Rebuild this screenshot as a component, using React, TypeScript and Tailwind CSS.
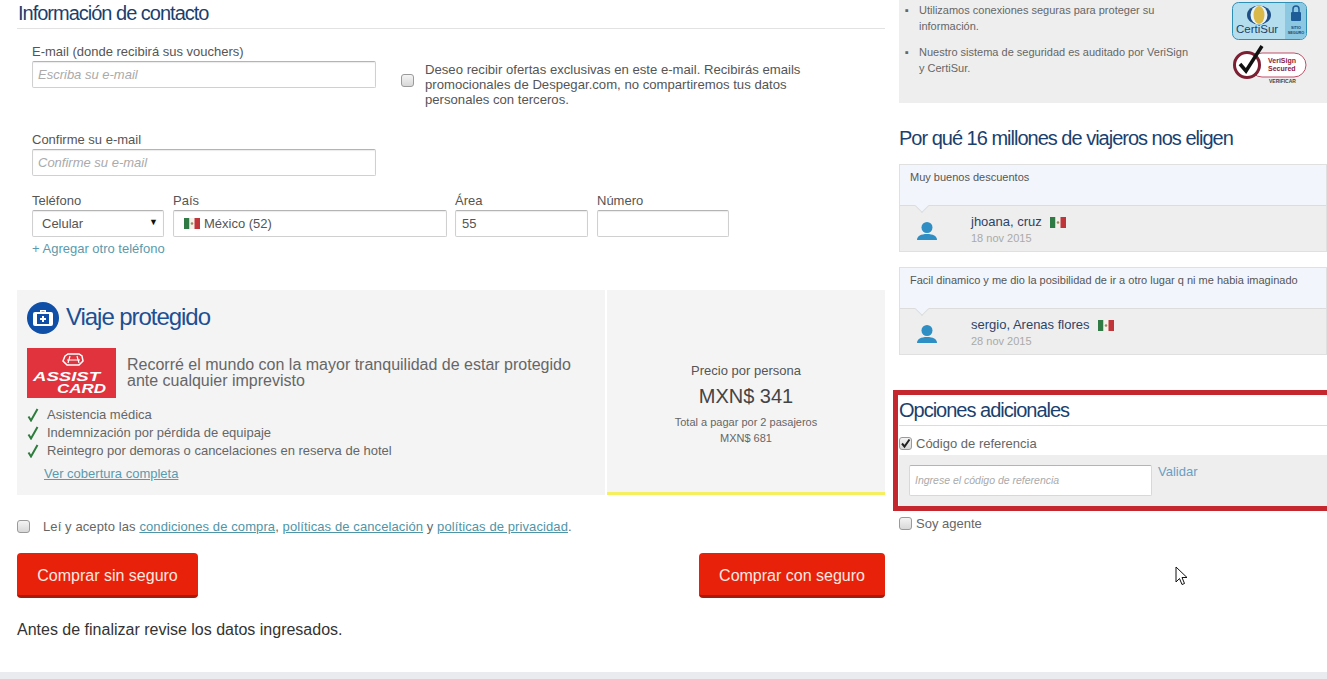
const field = 'h-[27px] border border-[#d0d0d0] border-t-[#b4b4b4] rounded-[2px] bg-white shadow-[inset_0_1px_1px_rgba(0,0,0,0.08)] text-[13px] text-[#555] flex items-center'

function Flag({ className = '' }: { className?: string }) {
  return (
    <svg width="16" height="11" viewBox="0 0 16 11" className={className}>
      <rect width="5.5" height="11" fill="#2f7a45" />
      <rect x="5.5" width="5" height="11" fill="#f4f1ec" />
      <rect x="10.5" width="5.5" height="11" fill="#c0353a" />
      <circle cx="8" cy="5.5" r="1.3" fill="#9a8a5a" />
    </svg>
  )
}

function Box({ checked = false, className = '' }: { checked?: boolean; className?: string }) {
  return (
    <span className={`flex h-[13px] w-[13px] shrink-0 items-center justify-center rounded-[3px] border border-[#9a9a9a] bg-gradient-to-b from-[#f4f4f4] to-[#d8d8d8] ${className}`}>
      {checked && (
        <svg width="11" height="11" viewBox="0 0 11 11" fill="none" stroke="#222" strokeWidth="2">
          <path d="M2 5.5l2.5 3L9.5 1.5" />
        </svg>
      )}
    </span>
  )
}

function Heading({ children }: { children: React.ReactNode }) {
  return <h2 className="text-[20px] leading-[24px] tracking-[-1px] text-[#1b3f6e]">{children}</h2>
}

function Check({ children }: { children: React.ReactNode }) {
  return (
    <li className="flex h-[18px] items-center text-[13px] text-[#666]">
      <svg width="12" height="14" viewBox="0 0 12 14" fill="none" stroke="#2e7d3e" strokeWidth="2" className="mr-[8px] shrink-0">
        <path d="M1.5 8.5l2.5 4L10.5 1" />
      </svg>
      {children}
    </li>
  )
}

function Review({ text, name, date }: { text: string; name: string; date: string }) {
  return (
    <div className="border border-[#e0e0e0] text-[11px]">
      <div className="h-[40px] bg-[#f2f6fc] px-[10px] pt-[5px] leading-[14px] text-[#555]">{text}</div>
      <div className="relative flex h-[46px] border-t border-[#dcdcdc] bg-[#eeeeee]">
        <span className="absolute -top-px left-[17px] h-[10px] w-[10px] -translate-y-[4px] rotate-45 border-b border-r border-[#dcdcdc] bg-[#f2f6fc]" />
        <svg width="20" height="20" viewBox="0 0 20 20" fill="#2f8fc4" className="ml-[17px] mt-[15px]">
          <circle cx="10" cy="6.5" r="5.5" />
          <path d="M0 19c0-4 4-6 10-6s10 2 10 6z" />
        </svg>
        <div className="ml-[34px] pt-[8px]">
          <div className="flex items-center text-[13px] leading-[16px] text-[#2b4468]">
            {name}
            <Flag className="ml-[8px]" />
          </div>
          <div className="mt-[1px] text-[11px] leading-[14px] text-[#aaa]">{date}</div>
        </div>
      </div>
    </div>
  )
}

function AssistCard() {
  return (
    <svg width="89" height="50" viewBox="0 0 89 50" className="shrink-0">
      <rect width="89" height="50" fill="#e1333d" />
      <path d="M38 8l3-2h11l3 2 1 5-4 4H40l-4-4z" fill="none" stroke="#fff" strokeWidth="1.5" />
      <path d="M40 12h13M43 8l-2 7M50 8l2 7" fill="none" stroke="#fff" strokeWidth="1.2" />
      <text x="6" y="33" fontSize="13" fontWeight="700" fontStyle="italic" fill="#fff" textLength="67" lengthAdjust="spacingAndGlyphs" fontFamily="Liberation Sans, sans-serif">ASSIST</text>
      <text x="30" y="44.500" fontSize="13" fontWeight="700" fontStyle="italic" fill="#fff" textLength="49" lengthAdjust="spacingAndGlyphs" fontFamily="Liberation Sans, sans-serif">CARD</text>
    </svg>
  )
}

function CertiSur() {
  return (
    <svg width="75" height="38" viewBox="0 0 75 38">
      <rect x="0.5" y="0.5" width="74" height="37" rx="6" fill="#b4deee" stroke="#2e8fb6" />
      <path d="M53 1h16a5 5 0 0 1 5 5v26a5 5 0 0 1-5 5H53z" fill="#8cc8e2" />
      <ellipse cx="27" cy="13" rx="12" ry="9.500" fill="#1d4e86" />
      <ellipse cx="27" cy="13" rx="8.500" ry="9.500" fill="#e9f4f8" />
      <ellipse cx="27" cy="13" rx="5.500" ry="9" fill="#d9b94a" />
      <rect x="59" y="10" width="10" height="9" rx="1" fill="#1d5c96" />
      <path d="M61 10V7a3 3 0 0 1 6 0v3" fill="none" stroke="#1d5c96" strokeWidth="1.5" />
      <text x="4" y="31" fontSize="11.500" fill="#1d3f66" fontFamily="Liberation Sans, sans-serif">CertiSur</text>
      <text x="64" y="27" fontSize="3.800" fontWeight="700" textAnchor="middle" fill="#1d3f66" fontFamily="Liberation Sans, sans-serif">SITIO</text>
      <text x="64" y="32" fontSize="3.800" fontWeight="700" textAnchor="middle" fill="#1d3f66" fontFamily="Liberation Sans, sans-serif">SEGURO</text>
    </svg>
  )
}

function VeriSign() {
  return (
    <svg width="75" height="40" viewBox="0 0 75 40">
      <rect x="18" y="8" width="56" height="24" rx="12" fill="#fff" stroke="#c05068" />
      <circle cx="15" cy="20" r="12.500" fill="#fff" stroke="#7c1f33" strokeWidth="3" />
      <path d="M8 19l6 7L30 1" fill="none" stroke="#111" strokeWidth="3.500" />
      <text x="36" y="18" fontSize="7" fontWeight="700" fill="#8c2138" fontFamily="Liberation Sans, sans-serif">VeriSign</text>
      <text x="36" y="26" fontSize="7" fontWeight="700" fill="#8c2138" fontFamily="Liberation Sans, sans-serif">Secured</text>
      <text x="37" y="38" fontSize="5" fontWeight="700" fill="#444" fontFamily="Liberation Sans, sans-serif">VERIFICAR</text>
    </svg>
  )
}

export default function App() {
  return (
    <div className="relative h-[679px] w-[1327px] overflow-hidden bg-white font-['Liberation_Sans',Arial,sans-serif]">
      <div className="flex h-[672px] pl-[17px]">
        {/* Left column */}
        <main className="w-[868px]">
          <div className="h-[29px] border-b border-[#e2e2e2] pl-px pt-px">
            <Heading>Información de contacto</Heading>
          </div>

          <div className="pl-[15px]">
            <div className="mt-[15px] flex">
              <div className="w-[344px]">
                <label className="block text-[13px] leading-[15px] text-[#555]">E-mail (donde recibirá sus vouchers)</label>
                <div className={`${field} mt-[2px] pl-[5px] italic text-[#aaa]`}>Escriba su e-mail</div>
              </div>
              <div className="ml-[25px] mt-[30px]">
                <Box />
              </div>
              <p className="ml-[11px] mt-[18px] w-[385px] text-[13.15px] leading-[15px] text-[#555]">
                Deseo recibir ofertas exclusivas en este e-mail. Recibirás emails promocionales de Despegar.com, no compartiremos tus datos personales con terceros.
              </p>
            </div>

            <div className="mt-[25px] w-[344px]">
              <label className="block text-[13px] leading-[15px] text-[#555]">Confirme su e-mail</label>
              <div className={`${field} mt-[2px] pl-[5px] italic text-[#aaa]`}>Confirme su e-mail</div>
            </div>

            <div className="mt-[17px] flex">
              <div className="mr-[9px] w-[132px]">
                <label className="block text-[13px] leading-[15px] text-[#555]">Teléfono</label>
                <div className={`${field} mt-[2px] justify-between pl-[9px] pr-[5px]`}>
                  Celular
                  <span className="mb-[2px] text-[9px] text-[#111]">▼</span>
                </div>
              </div>
              <div className="mr-[8px] w-[274px]">
                <label className="block text-[13px] leading-[15px] text-[#555]">País</label>
                <div className={`${field} mt-[2px] pl-[10px]`}>
                  <Flag className="mr-[4px]" />
                  México (52)
                </div>
              </div>
              <div className="mr-[9px] w-[133px]">
                <label className="block text-[13px] leading-[15px] text-[#555]">Área</label>
                <div className={`${field} mt-[2px] pl-[6px]`}>55</div>
              </div>
              <div className="w-[132px]">
                <label className="block text-[13px] leading-[15px] text-[#555]">Número</label>
                <div className={`${field} mt-[2px]`} />
              </div>
            </div>

            <div className="mt-[4px] text-[13px] leading-[15px] text-[#5b9aad]">+ Agregar otro teléfono</div>
          </div>

          {/* Viaje protegido */}
          <div className="mt-[34px] flex h-[205px]">
            <div className="w-[588px] bg-[#f4f4f5] pl-[10px] pt-[12px]">
              <div className="flex items-center">
                <span className="flex h-[32px] w-[32px] items-center justify-center rounded-full bg-[#0f4fa8]">
                  <svg width="20" height="18" viewBox="0 0 20 18" fill="#fff">
                    <path d="M7 3V1h6v2h5a2 2 0 0 1 2 2v10a2 2 0 0 1-2 2H2a2 2 0 0 1-2-2V5a2 2 0 0 1 2-2zM8.500 3h3V2.500h-3zM4 5v10h12V5zM9 7h2v2h2v2h-2v2H9v-2H7V9h2z" fillRule="evenodd" />
                  </svg>
                </span>
                <span className="-mt-[2px] ml-[7px] text-[24px] leading-[28px] tracking-[-1.05px] text-[#1d4f94]">Viaje protegido</span>
              </div>
              <div className="mt-[14px] flex">
                <AssistCard />
                <p className="ml-[11px] mt-[9px] w-[450px] text-[16px] leading-[16px] text-[#666]">
                  Recorré el mundo con la mayor tranquilidad de estar protegido ante cualquier imprevisto
                </p>
              </div>
              <ul className="mt-[8px]">
                <Check>Asistencia médica</Check>
                <Check>Indemnización por pérdida de equipaje</Check>
                <Check>Reintegro por demoras o cancelaciones en reserva de hotel</Check>
              </ul>
              <a className="ml-[17px] mt-[6px] block text-[13px] leading-[15px] text-[#5b9aad] underline">Ver cobertura completa</a>
            </div>
            <div className="ml-[2px] w-[278px] border-b-[3px] border-[#f6f060] bg-[#f4f4f5] pt-[73px] text-center">
              <div className="text-[13px] leading-[15px] text-[#555]">Precio por persona</div>
              <div className="mt-[5px] text-[20px] leading-[26px] text-[#444]">MXN$ 341</div>
              <div className="mt-[5px] text-[11px] leading-[16px] text-[#666]">
                Total a pagar por 2 pasajeros
                <br />
                MXN$ 681
              </div>
            </div>
          </div>

          <div className="mt-[24px] flex h-[15px] items-center text-[13px] tracking-[0.1px] text-[#666]">
            <Box className="mr-[13px]" />
            <span>
              Leí y acepto las <a className="text-[#4f95a8] underline">condiciones de compra</a>,{' '}
              <a className="text-[#4f95a8] underline">políticas de cancelación</a> y{' '}
              <a className="text-[#4f95a8] underline">políticas de privacidad</a>.
            </span>
          </div>

          <div className="mt-[19px] flex justify-between">
            <button className="h-[45px] w-[181px] rounded-[4px] border-b-[3px] border-[#a61c0c] bg-[#e8210a] pt-[3px] text-[16px] text-[#ffe9e0]">Comprar sin seguro</button>
            <button className="h-[45px] w-[186px] rounded-[4px] border-b-[3px] border-[#a61c0c] bg-[#e8210a] pt-[3px] text-[16px] text-[#ffe9e0]">Comprar con seguro</button>
          </div>

          <p className="mt-[23px] text-[16px] leading-[18px] text-[#333]">Antes de finalizar revise los datos ingresados.</p>
        </main>

        {/* Right column */}
        <aside className="ml-[14px] w-[428px] shrink-0">
          <div className="flex h-[103px] justify-between bg-[#eeeeee] pl-[20px] pr-[20px] pt-[2px]">
            <ul className="w-[275px] text-[11px] leading-[16px] text-[#666]">
              <li className="relative">
                <span className="absolute -left-[14px]">▪</span>
                Utilizamos conexiones seguras para proteger su
                <br />
                información.
              </li>
              <li className="relative mt-[10px]">
                <span className="absolute -left-[14px]">▪</span>
                Nuestro sistema de seguridad es auditado por VeriSign
                <br />y CertiSur.
              </li>
            </ul>
            <div className="flex flex-col gap-[5px]">
              <CertiSur />
              <VeriSign />
            </div>
          </div>

          <div className="mt-[23px]">
            <Heading>Por qué 16 millones de viajeros nos eligen</Heading>
          </div>
          <div className="mt-[14px] flex flex-col gap-[15px]">
            <Review text="Muy buenos descuentos" name="jhoana, cruz" date="18 nov 2015" />
            <Review text="Facil dinamico y me dio la posibilidad de ir a otro lugar q ni me habia imaginado" name="sergio, Arenas flores" date="28 nov 2015" />
          </div>

          <div className="relative mt-[43px] h-[28px] border-b border-[#dcdcdc]">
            <Heading>Opciones adicionales</Heading>
          </div>
          <div className="mt-[10px] flex h-[15px] items-center text-[13px] text-[#666]">
            <Box checked className="mr-[4px]" />
            Código de referencia
          </div>
          <div className="mt-[4px] flex h-[52px] bg-[#eeeeee] pl-[10px] pt-[10px]">
            <div className="flex h-[31px] w-[243px] items-center rounded-[2px] border border-[#d8d8d8] border-t-[#b4b4b4] bg-white pl-[5px] pt-px text-[10.5px] italic text-[#aaa]">
              Ingrese el código de referencia
            </div>
            <a className="ml-[6px] text-[13px] leading-[14px] text-[#6a9ec4]">Validar</a>
          </div>
          <div className="mt-[9px] flex h-[15px] items-center text-[13px] text-[#666]">
            <Box className="mr-[4px]" />
            Soy agente
          </div>
        </aside>
      </div>
      <div className="h-[7px] bg-[#e9ebee]" />

      {/* Annotation and pointer over the page */}
      <div className="absolute left-[893px] top-[390px] h-[121px] w-[440px] border-[5px] border-[#c5272f]" />
      <svg width="14" height="20" viewBox="0 0 14 20" className="absolute left-[1175px] top-[566px]">
        <path d="M1 1v15l3.500-3.500 2.500 6 2.500-1-2.500-6H12z" fill="#fff" stroke="#111" strokeWidth="1" />
      </svg>
    </div>
  )
}
